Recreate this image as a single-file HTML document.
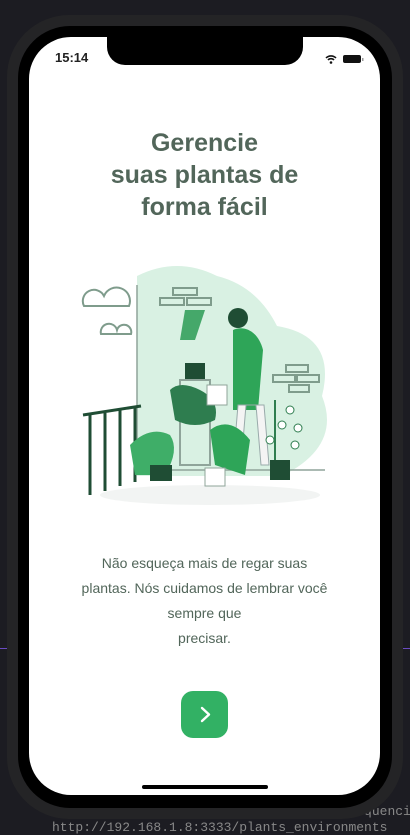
<!DOCTYPE html>
<html><head><meta charset="utf-8"><style>
*{margin:0;padding:0;box-sizing:border-box}
body{width:410px;height:830px;background:#1c1c22;position:relative;overflow:hidden;font-family:"Liberation Sans",sans-serif}
.code{position:absolute;left:52px;color:#888;font-family:"Liberation Mono",monospace;font-size:13px}
.phone{position:absolute;left:7px;top:15px;width:396px;height:804px;border-radius:62px;background:#242426}
.bezel{position:absolute;left:18px;top:26px;width:374px;height:782px;border-radius:52px;background:#000}
.screen{position:absolute;left:29px;top:37px;width:351px;height:758px;border-radius:42px;background:#fff;overflow:hidden}
.notch{position:absolute;left:78px;top:0;width:196px;height:28px;background:#000;border-radius:0 0 18px 18px}
.time{position:absolute;left:26px;top:13px;font-size:13px;font-weight:bold;color:#222}
h1{position:absolute;top:90px;left:0;width:351px;text-align:center;font-size:25px;line-height:32px;color:#52665a;font-weight:bold}
p{position:absolute;top:514px;left:0;width:351px;text-align:center;font-size:14px;line-height:25px;color:#52665a}
.btn{position:absolute;left:152px;top:654px;width:47px;height:47px;border-radius:12px;background:#32b164}
.home{position:absolute;left:113px;top:748px;width:126px;height:4px;border-radius:2px;background:#000}
</style></head><body>
<div style="position:absolute;left:0;top:648px;width:410px;height:1px;background:#6a4bc2"></div>
<div class="code" style="top:804px">http://192.168.1.8:3333/plants_water_frequencies</div>
<div class="code" style="top:820px">http://192.168.1.8:3333/plants_environments</div>
<div class="phone"></div><div class="bezel"></div>
<div class="screen">
<div class="notch"></div>
<div class="time">15:14</div>
<svg style="position:absolute;left:296px;top:16px" width="40" height="12"><path d="M1 5a7 7 0 0 1 10 0M3 7a4 4 0 0 1 6 0" stroke="#111" stroke-width="1.6" fill="none"/><circle cx="6" cy="9.5" r="1.3" fill="#111"/><rect x="18" y="2" width="18" height="8" rx="2" fill="#111"/><rect x="37" y="5" width="1.5" height="3" fill="#999"/></svg>
<h1>Gerencie<br>suas plantas de<br>forma fácil</h1>
<svg style="position:absolute;left:41px;top:223px" width="270" height="250" viewBox="70 260 270 250">
<path d="M137 276q40-20 80 0q40 10 60 50q60 10 45 70q20 50-40 80l-145 0z" fill="#d9f1e3"/>
<ellipse cx="210" cy="495" rx="110" ry="10" fill="#f2f4f3"/>
<line x1="137" y1="285" x2="137" y2="470" stroke="#8fa49a" stroke-width="1.5"/>
<line x1="137" y1="470" x2="325" y2="470" stroke="#8fa49a" stroke-width="1.5"/>
<path d="M84 306a10 10 0 0 1 20-10a8 8 0 0 1 25 10z" fill="none" stroke="#7f9c8c" stroke-width="2"/>
<path d="M101 334a8 8 0 0 1 16-4a6 6 0 0 1 14 4z" fill="none" stroke="#7f9c8c" stroke-width="2"/>
<g fill="none" stroke="#7f9c8c" stroke-width="2"><rect x="173" y="288" width="24" height="7"/><rect x="160" y="298" width="24" height="7"/><rect x="187" y="298" width="24" height="7"/><rect x="286" y="365" width="22" height="7"/><rect x="273" y="375" width="22" height="7"/><rect x="297" y="375" width="22" height="7"/><rect x="289" y="385" width="20" height="7"/></g>
<g stroke="#1f4d34" stroke-width="3" fill="none"><path d="M83 415l58-9"/><path d="M90 415v80M105 413v78M120 410v76M135 408v74"/></g>
<rect x="180" y="380" width="30" height="85" fill="none" stroke="#8fa49a" stroke-width="2"/>
<path d="M185 310l-5 30 15 0 10-30" fill="#45a86a"/>
<rect x="185" y="363" width="20" height="16" fill="#1f4d34"/>
<path d="M170 390q10-10 30 0q20 10 15 30q-20 10-40 0z" fill="#2e7d4f"/>
<rect x="207" y="385" width="20" height="20" fill="#fff" stroke="#8fa49a"/>
<path d="M233 330c10-5 25 0 30 20l-5 60 -25 0z" fill="#2ea558"/>
<circle cx="238" cy="318" r="10" fill="#1f4d34"/>
<path d="M238 405l-5 60 8 0 5-60 10 0 5 60 8 0 -5-60z" fill="#f4f4f4" stroke="#9aa"/>
<path d="M130 445q20-20 40-10q10 15 -5 40l-30 0z" fill="#3fae68"/>
<rect x="150" y="465" width="22" height="16" fill="#1f4d34"/>
<path d="M210 430q20-15 40 10l-5 35-30-10z" fill="#2ea558"/>
<rect x="205" y="468" width="20" height="18" fill="#fff" stroke="#8fa49a"/>
<path d="M275 400v60" stroke="#2e7d4f" stroke-width="2"/>
<g fill="#fff" stroke="#2e7d4f"><circle cx="290" cy="410" r="4"/><circle cx="282" cy="425" r="4"/><circle cx="298" cy="428" r="4"/><circle cx="270" cy="440" r="4"/><circle cx="295" cy="445" r="4"/></g>
<rect x="270" y="460" width="20" height="20" fill="#1f4d34"/>
</svg>
<p>Não esqueça mais de regar suas<br>plantas. Nós cuidamos de lembrar você<br>sempre que<br>precisar.</p>
<div class="btn"><svg width="47" height="47"><path d="M21 17l7 6.5-7 6.5" stroke="#fff" stroke-width="2.4" fill="none" stroke-linecap="round" stroke-linejoin="round"/></svg></div>
<div class="home"></div>
</div>
</body></html>
